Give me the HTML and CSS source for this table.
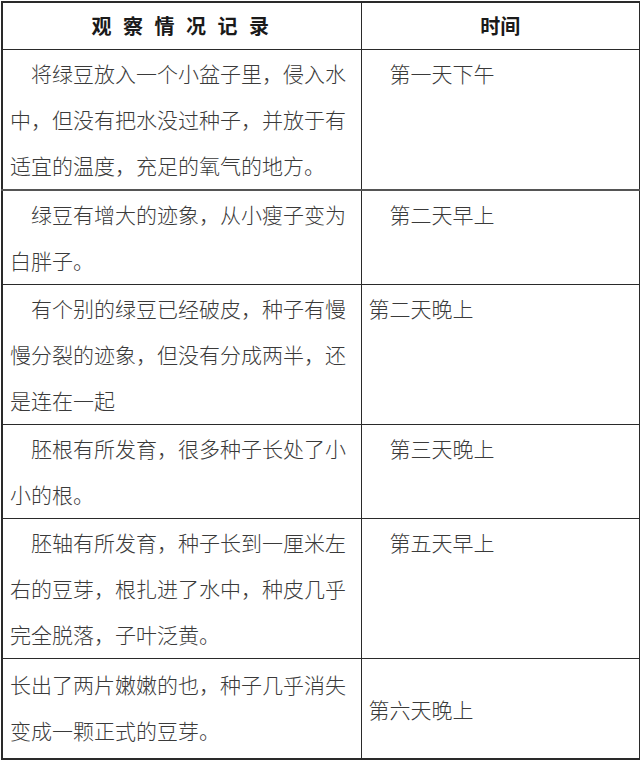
FILE: index.html
```html
<!DOCTYPE html>
<html lang="zh-CN">
<head>
<meta charset="utf-8">
<title>观察情况记录</title>
<link rel="stylesheet" href="styles.css">
</head>
<body>
<table class="log">
  <colgroup>
    <col class="col-note">
    <col class="col-time">
  </colgroup>
  <thead>
    <tr class="head-row">
      <th class="head head-note">观 察 情 况 记 录</th>
      <th class="head head-time">时间</th>
    </tr>
  </thead>
  <tbody>
    <tr class="row r1">
      <td class="note indent">将绿豆放入一个小盆子里，侵入水中，但没有把水没过种子，并放于有适宜的温度，充足的氧气的地方。</td>
      <td class="time indent">第一天下午</td>
    </tr>
    <tr class="row r2">
      <td class="note indent">绿豆有增大的迹象，从小瘦子变为白胖子。</td>
      <td class="time indent">第二天早上</td>
    </tr>
    <tr class="row r3">
      <td class="note indent">有个别的绿豆已经破皮，种子有慢慢分裂的迹象，但没有分成两半，还是连在一起</td>
      <td class="time">第二天晚上</td>
    </tr>
    <tr class="row r4">
      <td class="note indent">胚根有所发育，很多种子长处了小小的根。</td>
      <td class="time indent">第三天晚上</td>
    </tr>
    <tr class="row r5">
      <td class="note indent">胚轴有所发育，种子长到一厘米左右的豆芽，根扎进了水中，种皮几乎完全脱落，子叶泛黄。</td>
      <td class="time indent">第五天早上</td>
    </tr>
    <tr class="row r6">
      <td class="note">长出了两片嫩嫩的也，种子几乎消失变成一颗正式的豆芽。</td>
      <td class="time middle">第六天晚上</td>
    </tr>
  </tbody>
</table>
</body>
</html>
```

FILE: styles.css
```css
html, body {
  margin: 0;
  padding: 0;
  background: #ffffff;
}

body {
  padding: 1px 0 0 1px;
  font-family: "Noto Sans CJK SC", "Noto Sans", sans-serif;
  color: #3a3a3a;
}

.log {
  border-collapse: collapse;
  table-layout: fixed;
  width: 638px;
  border: 2px solid #2a2a2a;
}

.col-note {
  width: 359px;
}

.col-time {
  width: 279px;
}

.log th,
.log td {
  border: 1px solid #2a2a2a;
  vertical-align: top;
  text-align: left;
  font-size: 21px;
  line-height: 46px;
  font-weight: 300;
}

.head {
  height: 45px;
  padding: 0;
  line-height: 44px;
  color: #1a1a1a;
}

.log th.head {
  text-align: center;
  vertical-align: middle;
  font-size: 20px;
  font-weight: 700;
}

.head-note {
  letter-spacing: 3px;
  word-spacing: 1px;
}

.note {
  padding: 0 6px 1px 7px;
}

.time {
  padding: 0 8px 1px 7px;
}

.indent {
  text-indent: 21px;
}

.r1 td {
  border-bottom: 2px solid #555555;
}

.r6 td {
  height: 96px;
  padding-top: 2px;
}

.log td.middle {
  vertical-align: middle;
}
```
